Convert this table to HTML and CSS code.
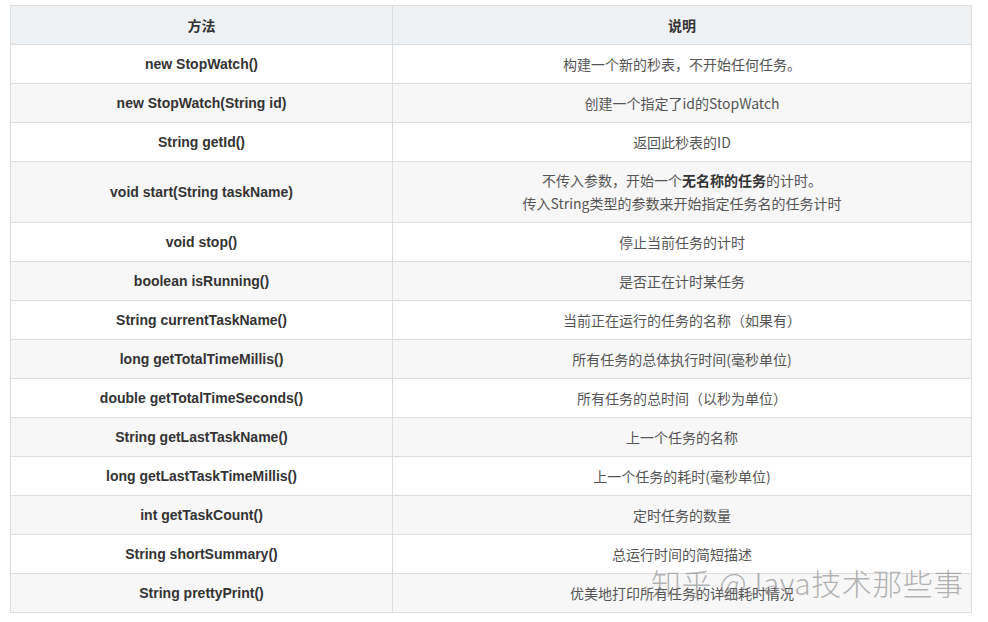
FILE: index.html
```html
<!DOCTYPE html>
<html lang="zh-CN">
<head>
<meta charset="utf-8">
<title>StopWatch 方法</title>
<link rel="stylesheet" href="styles.css">
</head>
<body>
<div class="page">
  <table class="api">
    <thead>
      <tr><th class="col-method">方法</th><th>说明</th></tr>
    </thead>
    <tbody>
      <tr><td class="m">new StopWatch()</td><td>构建一个新的秒表，不开始任何任务。</td></tr>
      <tr><td class="m">new StopWatch(String id)</td><td>创建一个指定了id的StopWatch</td></tr>
      <tr><td class="m">String getId()</td><td>返回此秒表的ID</td></tr>
      <tr class="tall"><td class="m">void start(String taskName)</td><td>不传入参数，开始一个<b>无名称的任务</b>的计时。<br>传入String类型的参数来开始指定任务名的任务计时</td></tr>
      <tr><td class="m">void stop()</td><td>停止当前任务的计时</td></tr>
      <tr><td class="m">boolean isRunning()</td><td>是否正在计时某任务</td></tr>
      <tr><td class="m">String currentTaskName()</td><td>当前正在运行的任务的名称（如果有）</td></tr>
      <tr><td class="m">long getTotalTimeMillis()</td><td>所有任务的总体执行时间(毫秒单位)</td></tr>
      <tr><td class="m">double getTotalTimeSeconds()</td><td>所有任务的总时间（以秒为单位）</td></tr>
      <tr><td class="m">String getLastTaskName()</td><td>上一个任务的名称</td></tr>
      <tr><td class="m">long getLastTaskTimeMillis()</td><td>上一个任务的耗时(毫秒单位)</td></tr>
      <tr><td class="m">int getTaskCount()</td><td>定时任务的数量</td></tr>
      <tr><td class="m">String shortSummary()</td><td>总运行时间的简短描述</td></tr>
      <tr><td class="m">String prettyPrint()</td><td>优美地打印所有任务的详细耗时情况</td></tr>
    </tbody>
  </table>
  <div class="watermark">知乎 @Java技术那些事</div>
</div>
</body>
</html>
```

FILE: styles.css
```css
html, body {
  margin: 0;
  padding: 0;
  background: #ffffff;
}

.page {
  position: relative;
  padding: 5px 0 0 10px;
  width: 962px;
}

.api {
  border-collapse: collapse;
  width: 962px;
  table-layout: fixed;
  font-family: "Liberation Sans", Arial, "Noto Sans CJK SC", sans-serif;
  font-size: 14px;
  color: #555555;
}

.api th,
.api td {
  border: 1px solid #dddddd;
  height: 39px;
  padding: 0 8px;
  text-align: center;
  vertical-align: middle;
  box-sizing: border-box;
}

.api th {
  background: #eef1f4;
  color: #333333;
  font-family: "Noto Sans CJK SC", sans-serif;
  font-weight: bold;
  font-size: 14px;
}

.api .col-method {
  width: 382px;
}

.api td {
  font-family: "Noto Sans CJK SC", sans-serif;
  font-size: 14px;
  line-height: 23px;
}

.api td.m {
  font-family: "Liberation Sans", Arial, sans-serif;
  font-weight: bold;
  font-size: 14px;
  color: #333333;
}

.api td b {
  color: #333333;
}

.api tbody tr:nth-child(even) td {
  background: #f7f7f7;
}

.api tr.tall td {
  height: 61px;
}

.watermark {
  position: absolute;
  left: 651px;
  top: 567px;
  font-family: "Noto Sans CJK SC", sans-serif;
  font-weight: 300;
  font-size: 30px;
  line-height: 30px;
  letter-spacing: 0.5px;
  color: rgba(130, 130, 130, 0.6);
  white-space: nowrap;
}
```
